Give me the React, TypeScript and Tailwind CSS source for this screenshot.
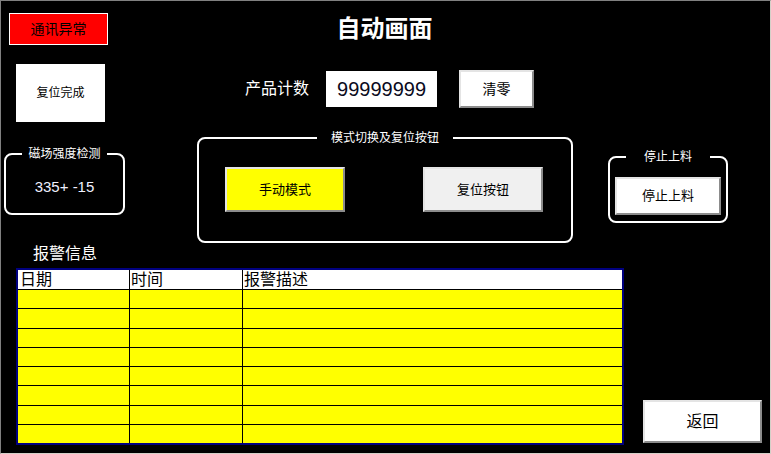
const FONT = "font-['Liberation_Sans','Noto_Sans_CJK_SC',sans-serif]";

const BTN3D =
  'border-2 border-t-[#e4e4e4] border-l-[#e4e4e4] border-r-[#8c8c8c] border-b-[#8c8c8c] flex items-center justify-center text-black';

const ROWS = 8;

export default function App() {
  return (
    <div
      className={`${FONT} w-[771px] h-[454px] bg-black border-t border-l border-t-[#808080] border-l-[#808080] border-r border-b border-r-[#d4d0c8] border-b-[#d4d0c8] flex flex-col overflow-hidden`}
    >
      {/* header row */}
      <div className="mt-[12px] h-[32px] grid grid-cols-[1fr_auto_1fr] items-center">
        <div className="ml-[8px] w-[99px] h-[32px] border border-white bg-[#ff0000] flex items-center justify-center text-[14px] text-black">
          通讯异常
        </div>
        <div className="text-white font-bold text-[24px] leading-[32px] translate-x-[-1px]">自动画面</div>
        <div />
      </div>

      {/* reset / counter row */}
      <div className="mt-[19px] flex items-start">
        <div className="ml-[15px] w-[89px] h-[58px] bg-white flex items-center justify-center text-[12px] text-black">
          复位完成
        </div>
        <div className="ml-[140px] mt-[7px] h-[36px] flex items-center text-white text-[16px]">产品计数</div>
        <div className="ml-[17px] mt-[7px] w-[111px] h-[36px] bg-white flex items-center justify-center text-[20px] text-[#0a0a20]">
          99999999
        </div>
        <button className={`${BTN3D} ml-[22px] mt-[6px] w-[75px] h-[38px] bg-white text-[14px]`}>清零</button>
      </div>

      {/* group boxes */}
      <div className="mt-[8px] flex items-start">
        <fieldset className="ml-[3px] mt-[16px] w-[121px] h-[69px] border-2 border-white rounded-[8px]">
          <legend className="mx-auto px-[6px] text-[12px] leading-[16px] text-white">磁场强度检测</legend>
          <div className="flex justify-center pt-[16px] text-[15px] leading-[18px] text-[#f0f0ff]">335+ -15</div>
        </fieldset>

        <fieldset className="ml-[72px] w-[376px] h-[113px] border-2 border-white rounded-[8px]">
          <legend className="mx-auto px-[14px] text-[12px] leading-[16px] text-white">模式切换及复位按钮</legend>
          <div className="mt-[21px] pl-[26px] pr-[28px] flex justify-between">
            <button className={`${BTN3D} w-[120px] h-[45px] bg-[#ffff00] text-[13px]`}>手动模式</button>
            <button className={`${BTN3D} w-[120px] h-[45px] bg-[#f0f0f0] text-[13px]`}>复位按钮</button>
          </div>
        </fieldset>

        <fieldset className="ml-[35px] mt-[19px] w-[120px] h-[74px] border-2 border-white rounded-[8px]">
          <legend className="mx-auto px-[18px] text-[12px] leading-[16px] text-white">停止上料</legend>
          <div className="mt-[12px] px-[5px]">
            <button className={`${BTN3D} w-[106px] h-[38px] bg-white text-[13px]`}>停止上料</button>
          </div>
        </fieldset>
      </div>

      {/* alarm info */}
      <div className="mt-[1px] ml-[32px] text-white text-[16px] leading-[20px]">报警信息</div>

      <div className="mt-[4px] flex items-start">
        <div className="ml-[15px] w-[608px] h-[177px] border-2 border-[#000080] bg-[#ffff00] flex flex-col">
          <div className="grid grid-cols-[112px_113px_1fr] h-[20px] bg-white border-b border-black text-[16px] leading-[19px] text-black">
            <div className="border-r border-black pl-[2px]">日期</div>
            <div className="border-r border-black pl-[1px]">时间</div>
            <div className="pl-[1px]">报警描述</div>
          </div>
          {Array.from({ length: ROWS }).map((_, i) => (
            <div
              key={i}
              className={`grid grid-cols-[112px_113px_1fr] flex-1 ${i < ROWS - 1 ? 'border-b border-black' : ''}`}
            >
              <div className="border-r border-black" />
              <div className="border-r border-black" />
              <div />
            </div>
          ))}
        </div>
        <button className={`${BTN3D} ml-[19px] mt-[132px] w-[119px] h-[43px] bg-white text-[16px]`}>返回</button>
      </div>
    </div>
  );
}
